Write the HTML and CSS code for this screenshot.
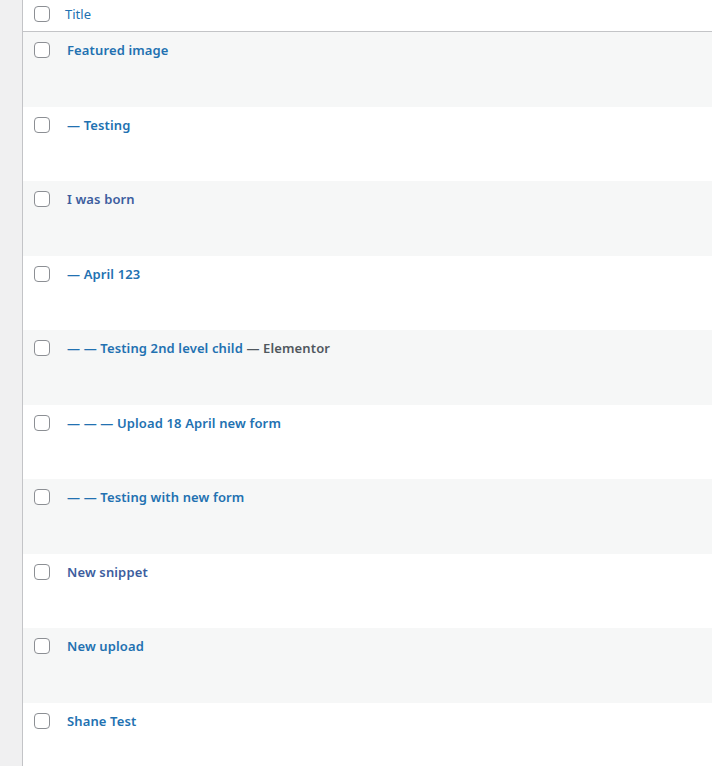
FILE: index.html
```html
<!DOCTYPE html>
<html>
<head>
<meta charset="utf-8">
<link rel="stylesheet" href="styles.css">
</head>
<body>
<div class="page">
  <div class="sidebar"></div>
  <div class="table">
    <div class="head">
      <span class="cb"></span>
      <span class="head-title">Title</span>
    </div>
    <div class="row alt"><span class="cb"></span><a class="title">Featured image</a></div>
    <div class="row"><span class="cb"></span><a class="title">— Testing</a></div>
    <div class="row alt"><span class="cb"></span><a class="title visited">I was born</a></div>
    <div class="row"><span class="cb"></span><a class="title">— April 123</a></div>
    <div class="row alt"><span class="cb"></span><span class="title"><a>— — Testing 2nd level child</a> <span class="state">— Elementor</span></span></div>
    <div class="row"><span class="cb"></span><a class="title">— — — Upload 18 April new form</a></div>
    <div class="row alt"><span class="cb"></span><a class="title">— — Testing with new form</a></div>
    <div class="row"><span class="cb"></span><a class="title visited">New snippet</a></div>
    <div class="row alt"><span class="cb"></span><a class="title">New upload</a></div>
    <div class="row"><span class="cb"></span><a class="title">Shane Test</a></div>
  </div>
</div>
</body>
</html>
```

FILE: styles.css
```css
html, body {
  margin: 0;
  padding: 0;
  background: #fff;
  font-family: "Segoe UI", "Noto Sans", "Liberation Sans", sans-serif;
  font-size: 13px;
  overflow: hidden;
}
.page {
  display: flex;
  height: 766px;
}
.sidebar {
  width: 22px;
  flex: none;
  background: #f0f0f1;
  border-right: 1px solid #c3c4c7;
}
.table {
  flex: 1;
  display: flex;
  flex-direction: column;
  overflow: hidden;
}
.head {
  flex: none;
  height: 31px;
  border-bottom: 1px solid #c3c4c7;
  display: flex;
  align-items: flex-start;
  padding-left: 11px;
  box-sizing: content-box;
}
.cb {
  width: 16px;
  height: 16px;
  box-sizing: border-box;
  border: 1px solid #8c8f94;
  border-radius: 4px;
  background: #fff;
  flex: none;
}
.head .cb {
  margin-top: 6px;
}
.head-title {
  margin-left: 15px;
  margin-top: 5px;
  color: #2271b1;
  font-size: 13px;
  line-height: 18px;
}
.row {
  height: 74.5px;
  flex: none;
  display: flex;
  align-items: flex-start;
  padding-left: 11px;
  box-sizing: border-box;
}
.row.alt {
  background: #f6f7f7;
}
.row .cb {
  margin-top: 10px;
}
.title {
  margin-left: 17px;
  margin-top: 9px;
  color: #2271b1;
  font-weight: 600;
  font-size: 13px;
  line-height: 18px;
  letter-spacing: 0.13px;
  white-space: nowrap;
}
.title a {
  color: #2271b1;
}
.title.visited {
  color: #3c5d9e;
}
.state {
  color: #50575e;
}
```
